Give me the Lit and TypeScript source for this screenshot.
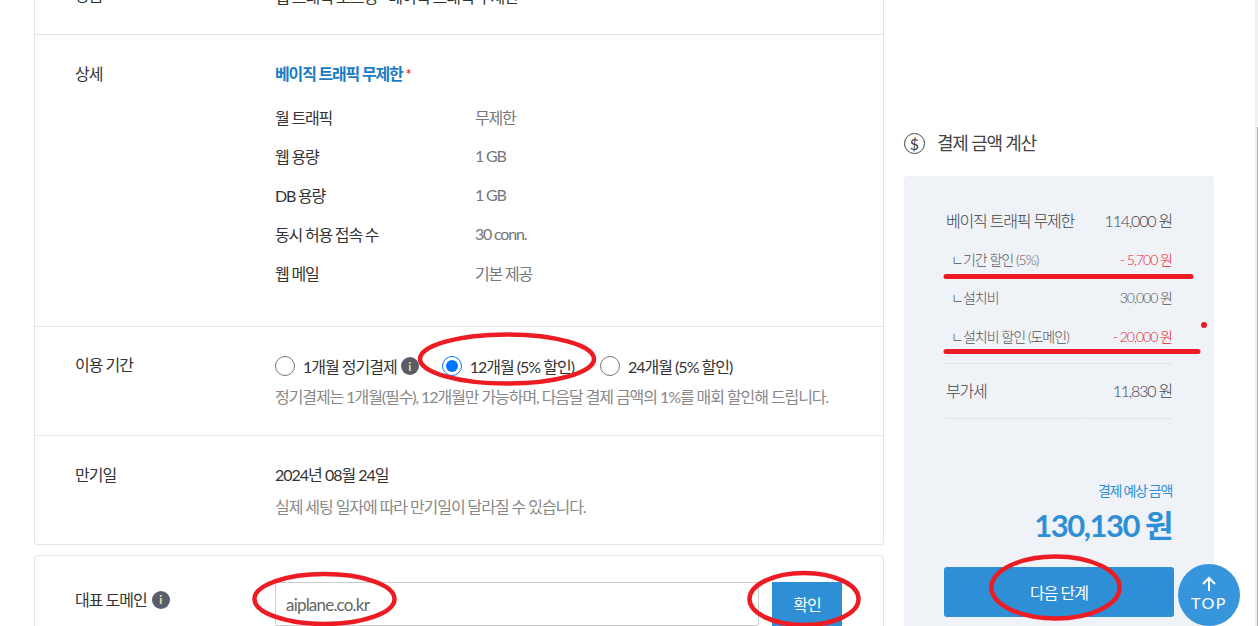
import { LitElement, html, css } from 'lit';
import { customElement } from 'lit/decorators.js';

const specs = [
  ['월 트래픽', '무제한'],
  ['웹 용량', '1 GB'],
  ['DB 용량', '1 GB'],
  ['동시 허용 접속 수', '30 conn.'],
  ['웹 메일', '기본 제공'],
];

const subRows = [
  ['ㄴ기간 할인 (5%)', '- 5,700 원', true],
  ['ㄴ설치비', '30,000 원', false],
  ['ㄴ설치비 할인 (도메인)', '- 20,000 원', true],
];

@customElement('app-root')
export class AppRoot extends LitElement {
  static styles = css`
    * {
      margin: 0;
      padding: 0;
      box-sizing: border-box;
    }
    :host {
      display: block;
      position: relative;
      width: 1258px;
      height: 626px;
      overflow: hidden;
      background: #fff;
      font-family: Lato, 'Noto Sans CJK KR', sans-serif;
      font-size: 16px;
      letter-spacing: -1px;
      color: #333;
    }
    .page {
      display: flex;
      margin-top: -61px;
      padding-left: 34px;
    }
    .left {
      width: 850px;
      flex: none;
    }
    .card {
      border: 1px solid #e4e4e4;
      border-radius: 3px;
      background: #fff;
    }
    .card + .card {
      margin-top: 10px;
    }
    .row {
      display: grid;
      grid-template-columns: 200px 1fr;
      align-items: start;
      padding: 28px 40px 0;
      border-top: 1px solid #e4e4e4;
    }
    .row:first-child {
      border-top: 0;
    }
    .row.product {
      height: 94px;
      padding-top: 44px;
    }
    .row.detail {
      height: 292px;
    }
    .row.term {
      height: 109px;
      padding-top: 27px;
    }
    .row.expiry {
      height: 109px;
    }
    .row.domain {
      height: 120px;
      padding-top: 26px;
    }
    .label {
      line-height: 22px;
      display: flex;
      align-items: center;
      gap: 5px;
    }
    .domain .label {
      height: 36px;
    }
    .title {
      font-weight: 700;
      letter-spacing: -1.15px;
      color: #1a7cc4;
      line-height: 22px;
    }
    .title i {
      color: #e02020;
      font-style: normal;
      font-weight: 400;
    }
    .specs {
      display: grid;
      grid-template-columns: 200px 1fr;
      grid-auto-rows: 39px;
      margin-top: 12px;
      align-items: center;
      letter-spacing: -1.2px;
    }
    .specs span:nth-child(even) {
      color: #777;
    }
    .options {
      display: flex;
      align-items: center;
      height: 24px;
    }
    .options label {
      display: flex;
      align-items: center;
      gap: 8px;
      margin-right: 26px;
    }
    .options label:first-child {
      margin-right: 4px;
    }
    .options input {
      width: 20px;
      height: 20px;
      margin: 0;
      flex: none;
    }
    .info {
      display: inline-flex;
      align-items: center;
      justify-content: center;
      width: 18px;
      height: 18px;
      border-radius: 50%;
      background: #5a5d68;
      color: #e9e7a4;
      font-size: 12px;
      font-weight: 700;
      letter-spacing: 0;
      flex: none;
    }
    .options .info {
      margin-right: 23px;
    }
    .hint {
      margin-top: 9px;
      line-height: 20px;
      letter-spacing: -1.07px;
      color: #888;
    }
    .expiry .hint {
      margin-top: 11px;
    }
    .date {
      line-height: 22px;
    }
    .domain-field {
      display: flex;
      gap: 13px;
      height: 44px;
    }
    .domain-field input {
      width: 484px;
      height: 44px;
      padding: 0 10px;
      border: 1px solid #ccc;
      border-radius: 2px;
      font: inherit;
      font-size: 17px;
      letter-spacing: -0.8px;
      color: #666;
      outline: none;
    }
    .domain-field button {
      width: 70px;
      border: 0;
      background: #2f8fd6;
      color: #fff;
      font: inherit;
      letter-spacing: inherit;
    }
    .right {
      width: 310px;
      flex: none;
      margin-left: 20px;
    }
    .heading {
      display: flex;
      align-items: center;
      gap: 12px;
      height: 24px;
      margin-top: 192px;
      font-size: 18px;
      font-weight: 400;
      letter-spacing: -1.2px;
      color: #444;
    }
    .heading b {
      font-weight: 400;
      margin-bottom: 2px;
    }
    .dollar {
      display: inline-flex;
      align-items: center;
      justify-content: center;
      width: 21px;
      height: 21px;
      border: 1.5px solid #444;
      border-radius: 50%;
      font-size: 16px;
      letter-spacing: 0;
    }
    .box {
      margin-top: 21px;
      height: 600px;
      padding: 25px 42px 0;
      background: #eff2f7;
      border-radius: 4px;
    }
    .line {
      display: grid;
      grid-template-columns: 138px 86px;
      gap: 2px;
      align-items: center;
      height: 38.5px;
      color: #444;
      font-weight: 300;
      letter-spacing: -1.2px;
    }
    .line span:last-child {
      text-align: right;
      white-space: nowrap;
      justify-self: end;
    }
    .line span:first-child {
      white-space: nowrap;
    }
    .line.sub {
      font-size: 14px;
      letter-spacing: -1px;
      color: #555;
    }
    .line.sub span:first-child {
      padding-left: 5px;
    }
    .line.minus span:last-child {
      color: #e8202a;
    }
    .rule {
      display: grid;
      grid-template-columns: 138px 86px;
      gap: 2px;
    }
    .rule span {
      height: 1px;
      background: #dfe2e6;
    }
    .rule.first {
      margin-top: 8px;
    }
    .line.vat {
      height: 54px;
      padding-bottom: 2px;
    }
    .total {
      margin-top: 62px;
      text-align: right;
      color: #2f8fd6;
    }
    .total p {
      font-size: 14px;
      letter-spacing: -1.3px;
      line-height: 20px;
    }
    .total strong {
      display: block;
      margin-top: 4px;
      font-size: 31px;
      letter-spacing: -1.5px;
      line-height: 40px;
      font-weight: 700;
    }
    .next {
      display: block;
      width: 230px;
      height: 50px;
      margin: 22px -2px 0;
      border: 0;
      border-radius: 3px;
      background: #2f8fd6;
      color: #fff;
      font: inherit;
      letter-spacing: inherit;
    }
    .top {
      position: absolute;
      left: 1178px;
      top: 564px;
      width: 62px;
      height: 62px;
      border-radius: 50%;
      background: #3795dc;
      color: #fff;
      display: flex;
      flex-direction: column;
      align-items: center;
      padding-top: 12px;
      font-size: 16px;
      letter-spacing: 1.5px;
      line-height: 20px;
    }
    .top svg {
      display: block;
      margin-bottom: 1px;
    }
    .scrollbar {
      position: absolute;
      right: 0;
      top: 0;
      width: 3px;
      height: 626px;
      background: #f1f1f1;
    }
    .scrollbar div {
      margin: 127px 0 0 2px;
      width: 1px;
      height: 499px;
      background: #b5b5b5;
    }
    .marks {
      position: absolute;
      inset: 0;
      pointer-events: none;
    }
  `;

  render() {
    return html`
      <div class="page">
        <div class="left">
          <div class="card">
            <div class="row product">
              <div class="label">상품</div>
              <div>웹 트래픽 호스팅 - 베이직 트래픽 무제한</div>
            </div>
            <div class="row detail">
              <div class="label">상세</div>
              <div>
                <div class="title">베이직 트래픽 무제한 <i>*</i></div>
                <div class="specs">
                  ${specs.map(([k, v]) => html`<span>${k}</span><span>${v}</span>`)}
                </div>
              </div>
            </div>
            <div class="row term">
              <div class="label">이용 기간</div>
              <div>
                <div class="options">
                  <label><input type="radio" name="term" />1개월 정기결제</label>
                  <span class="info">i</span>
                  <label><input type="radio" name="term" checked />12개월 (5% 할인)</label>
                  <label><input type="radio" name="term" />24개월 (5% 할인)</label>
                </div>
                <p class="hint">정기결제는 1개월(필수), 12개월만 가능하며, 다음달 결제 금액의 1%를 매회 할인해 드립니다.</p>
              </div>
            </div>
            <div class="row expiry">
              <div class="label">만기일</div>
              <div>
                <div class="date">2024년 08월 24일</div>
                <p class="hint">실제 세팅 일자에 따라 만기일이 달라질 수 있습니다.</p>
              </div>
            </div>
          </div>
          <div class="card">
            <div class="row domain">
              <div class="label">대표 도메인 <span class="info">i</span></div>
              <div class="domain-field">
                <input type="text" .value=${'aiplane.co.kr'} />
                <button>확인</button>
              </div>
            </div>
          </div>
        </div>
        <div class="right">
          <h3 class="heading"><span class="dollar">$</span><b>결제 금액 계산</b></h3>
          <div class="box">
            <div class="line"><span>베이직 트래픽 무제한</span><span>114,000 원</span></div>
            ${subRows.map(
              ([k, v, minus]) => html`<div class="line sub ${minus ? 'minus' : ''}"><span>${k}</span><span>${v}</span></div>`
            )}
            <div class="rule first"><span></span><span></span></div>
            <div class="line vat"><span>부가세</span><span>11,830 원</span></div>
            <div class="rule"><span></span><span></span></div>
            <div class="total">
              <p>결제 예상 금액</p>
              <strong>130,130 원</strong>
            </div>
            <button class="next">다음 단계</button>
          </div>
        </div>
      </div>
      <div class="scrollbar"><div></div></div>
      <div class="top">
        <svg width="16" height="16" viewBox="0 0 16 16" fill="none" stroke="#fff" stroke-width="2">
          <path d="M8 15V2M2 8l6-6 6 6" />
        </svg>
        TOP
      </div>
      <svg class="marks" width="1258" height="626" fill="none" stroke="#ed1c24">
        <ellipse cx="507" cy="359" rx="87" ry="24.5" stroke-width="4.5" />
        <ellipse cx="324.5" cy="599" rx="70" ry="25" stroke-width="4.5" />
        <ellipse cx="804" cy="599" rx="54.5" ry="26" stroke-width="4.5" />
        <ellipse cx="1055.5" cy="587.5" rx="64" ry="31" stroke-width="4.5" />
        <path d="M946 276.5H1191M946 351.5H1198" stroke-width="5" stroke-linecap="round" />
        <circle cx="1204" cy="325" r="3" fill="#ed1c24" stroke="none" />
      </svg>
    `;
  }
}
